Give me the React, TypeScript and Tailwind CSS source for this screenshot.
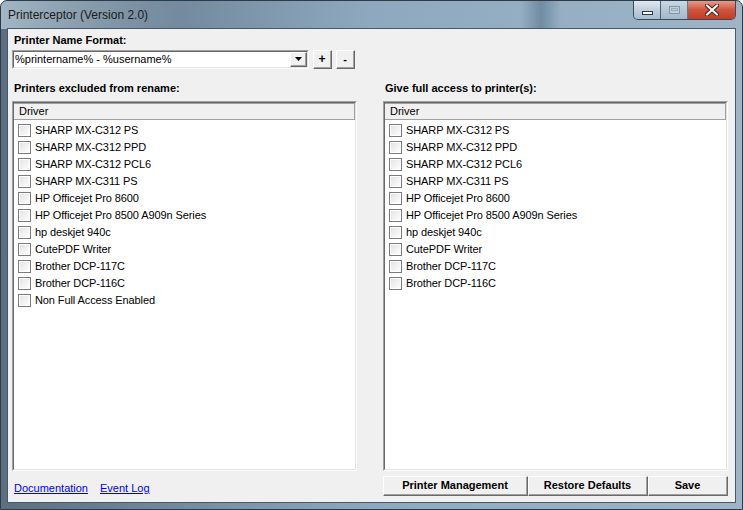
import React from 'react';

const printersLeft = [
    'SHARP MX-C312 PS',
    'SHARP MX-C312 PPD',
    'SHARP MX-C312 PCL6',
    'SHARP MX-C311 PS',
    'HP Officejet Pro 8600',
    'HP Officejet Pro 8500 A909n Series',
    'hp deskjet 940c',
    'CutePDF Writer',
    'Brother DCP-117C',
    'Brother DCP-116C',
    'Non Full Access Enabled',
];

const printersRight = printersLeft.slice(0, 10);

const font = { fontFamily: '"Liberation Sans", Arial, sans-serif' };

const Checkbox: React.FC = () => (
    <div className="w-[13px] h-[13px] border border-[#7b7b7b] bg-white p-px shrink-0">
        <div className="w-full h-full bg-gradient-to-br from-[#e4e4e4] to-[#fdfdfd]" />
    </div>
);

const PrinterList: React.FC<{ items: string[] }> = ({ items }) => (
    <div className="h-[370px] border-t border-l border-t-[#a0a0a0] border-l-[#a0a0a0] border-b border-r border-b-white border-r-white">
        <div className="h-full border-t border-l border-t-[#696969] border-l-[#696969] border-b border-r border-b-[#e3e3e3] border-r-[#e3e3e3] bg-white flex flex-col">
            <div className="h-[17px] bg-[#f0f0f0] border-b border-b-[#a0a0a0] border-r border-r-[#a0a0a0] border-t border-t-[#a0a0a0] flex items-center pl-[5px] text-[11px] text-black">
                Driver
            </div>
            <div className="flex flex-col pt-[2px]">
                {items.map((name) => (
                    <div key={name} className="h-[17px] flex items-center pl-[4px] gap-[4px] text-[11px] tracking-[-0.1px] text-black">
                        <Checkbox />
                        <span>{name}</span>
                    </div>
                ))}
            </div>
        </div>
    </div>
);

const RaisedButton: React.FC<{ className?: string; children: React.ReactNode }> = ({ className, children }) => (
    <div className={`border-t border-l border-t-white border-l-white border-b border-r border-b-[#696969] border-r-[#696969] ${className}`}>
        <div className="w-full h-full bg-[#f0f0f0] border-b border-r border-b-[#a0a0a0] border-r-[#a0a0a0] flex items-center justify-center">
            {children}
        </div>
    </div>
);

const App: React.FC = () => {
    return (
        <div style={font} className="w-[743px] h-[510px] relative overflow-hidden border border-[#2d3b48] rounded-t-[7px] bg-gradient-to-r from-[#5b6f80] via-[#8ea9bf] to-[#9db4c6]">
            {/* glass streaks */}
            <div className="absolute left-[520px] top-0 w-[40px] h-[28px] bg-gradient-to-r from-transparent via-[#5f7e95] to-transparent opacity-70" />
            <div className="absolute left-0 top-0 w-[180px] h-[28px] bg-gradient-to-r from-[#b5c8d6] to-transparent opacity-80" />

            {/* title bar */}
            <div className="relative h-[27px] flex items-start">
                <div className="pl-[7px] pt-[5px] text-[12px] text-[#1b1b1b]">
                    Printerceptor (Version 2.0)
                </div>
                <div className="absolute right-[6px] top-[-1px] flex h-[20px] rounded-b-[5px] border border-t-0 border-[#3c4b5a] overflow-hidden">
                    <div className="w-[27px] h-full bg-gradient-to-b from-[#e3ebf2] via-[#c2d1de] to-[#a6bccd] border-r border-r-[#51606e] flex items-center justify-center">
                        <div className="w-[11px] h-[4px] bg-white border border-[#2e3a45] mt-[6px]" />
                    </div>
                    <div className="w-[27px] h-full bg-gradient-to-b from-[#e3ebf2] via-[#c2d1de] to-[#a6bccd] border-r border-r-[#51606e] flex items-center justify-center opacity-70">
                        <div className="w-[11px] h-[8px] border border-[#7d8c99] bg-[#d2dce5] flex items-center justify-center">
                            <div className="w-[7px] h-[3px] border border-[#9aa8b3]" />
                        </div>
                    </div>
                    <div className="w-[47px] h-full bg-gradient-to-b from-[#e8a493] via-[#d0553f] to-[#c33b25] flex items-center justify-center">
                        <svg width="14" height="12" viewBox="0 0 14 12">
                            <path d="M2 1.5 L12 10.5 M12 1.5 L2 10.5" stroke="#45241c" strokeWidth="4" strokeLinecap="square" />
                            <path d="M2 1.5 L12 10.5 M12 1.5 L2 10.5" stroke="#ffffff" strokeWidth="2" strokeLinecap="square" />
                        </svg>
                    </div>
                </div>
            </div>

            {/* client area */}
            <div className="relative mx-[6px] h-[475px] border border-[#4a5866] bg-[#f0f0f0] pl-[4px] pr-[7px] text-black">
                <div className="pl-[2px] pt-[4px] text-[11px] font-bold h-[21px] leading-[14px]">Printer Name Format:</div>
                <div className="flex items-center gap-[3px] h-[19px]">
                    <div className="w-[297px] h-[19px] border-t border-l border-t-[#a0a0a0] border-l-[#a0a0a0] border-b border-r border-b-white border-r-white">
                        <div className="h-full border-t border-l border-t-[#696969] border-l-[#696969] border-b border-r border-b-[#e3e3e3] border-r-[#e3e3e3] bg-white flex items-center">
                            <span className="flex-1 pl-[1px] text-[11px]">%printername% - %username%</span>
                            <RaisedButton className="w-[17px] h-[15px]">
                                <svg width="7" height="4" viewBox="0 0 7 4"><path d="M0 0 H7 L3.5 4 Z" fill="#000" /></svg>
                            </RaisedButton>
                        </div>
                    </div>
                    <RaisedButton className="w-[19px] h-[19px] ml-[1px]">
                        <span className="text-[12px] font-bold leading-none">+</span>
                    </RaisedButton>
                    <RaisedButton className="w-[19px] h-[19px] ml-[1px]">
                        <span className="text-[11px] font-bold leading-none">-</span>
                    </RaisedButton>
                </div>

                <div className="flex gap-[26px] mt-[12px]">
                    <div className="w-[345px] flex flex-col">
                        <div className="pl-[2px] text-[11px] font-bold h-[20px] leading-[14px]">Printers excluded from rename:</div>
                        <PrinterList items={printersLeft} />
                        <div className="flex gap-[12px] pl-[2px] mt-[9px] text-[11px] text-[#0000ff] underline">
                            <span>Documentation</span>
                            <span>Event Log</span>
                        </div>
                    </div>
                    <div className="w-[345px] flex flex-col">
                        <div className="pl-[2px] text-[11px] font-bold h-[20px] leading-[14px]">Give full access to printer(s):</div>
                        <PrinterList items={printersRight} />
                        <div className="flex mt-[5px] text-[11px] font-bold">
                            <RaisedButton className="w-[145px] h-[20px]">Printer Management</RaisedButton>
                            <RaisedButton className="w-[120px] h-[20px]">Restore Defaults</RaisedButton>
                            <RaisedButton className="w-[80px] h-[20px]">Save</RaisedButton>
                        </div>
                    </div>
                </div>
            </div>
        </div>
    );
};

export default App;
